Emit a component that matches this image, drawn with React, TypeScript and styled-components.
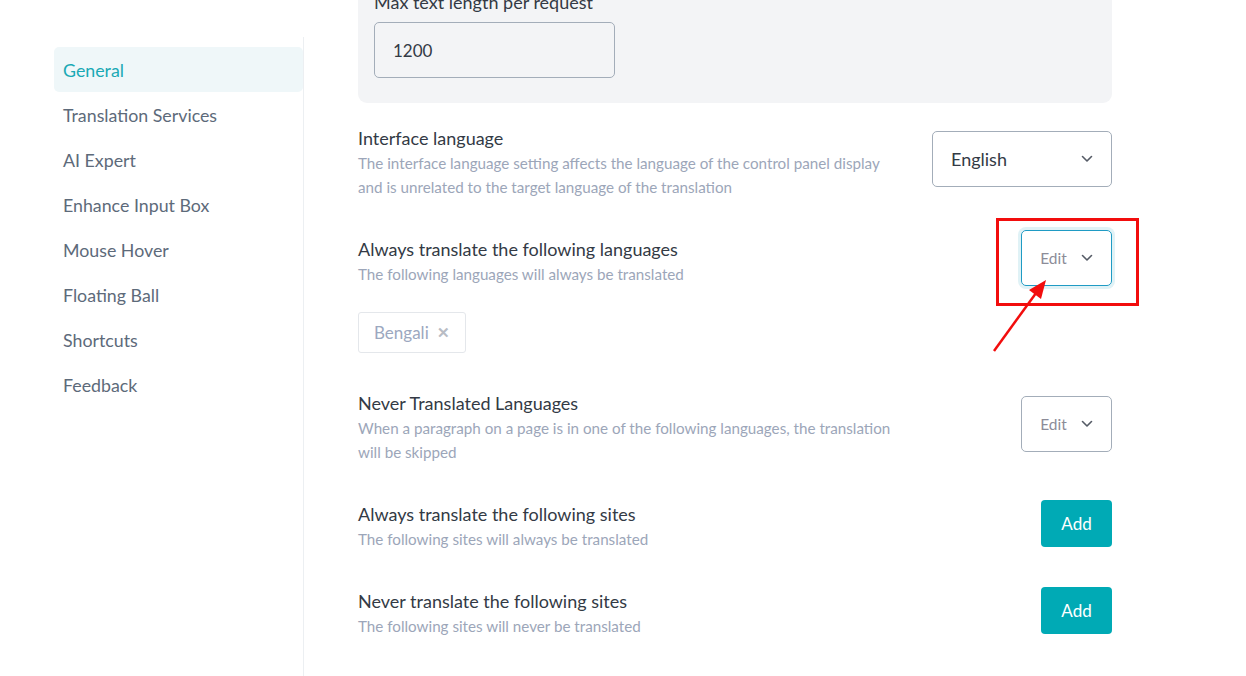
import React from "react";
import styled, { createGlobalStyle } from "styled-components";

const GlobalStyle = createGlobalStyle`
    html, body {
        margin: 0;
        padding: 0;
        background: #ffffff;
        font-family: Lato, "Noto Sans", sans-serif;
        overflow: hidden;
    }
`;

type NavItemProps = {
    active?: boolean
}

const Page = styled.div`
    display: flex;
    width: 1246px;
    height: 676px;
    overflow: hidden;
`;

const Sidebar = styled.nav`
    display: flex;
    flex-direction: column;
    width: 249px;
    margin: 37px 0 0 54px;
    padding-top: 10px;
    border-right: 1px solid #eceff2;
`;

const NavItem = styled.div<NavItemProps>`
    height: 45px;
    display: flex;
    align-items: center;
    padding-left: 9px;
    border-radius: 5px;
    font-size: 17.8px;
    color: ${props => props.active ? "#1aa9b5" : "#5d6a7a"};
    background-color: ${props => props.active ? "#eff7f9" : "transparent"};
`;

const Main = styled.main`
    display: flex;
    flex-direction: column;
    width: 754px;
    margin-left: 54px;
`;

const Card = styled.div`
    margin-top: -26px;
    padding: 16px 16px 25px;
    background-color: #f3f4f6;
    border-radius: 0 0 9px 9px;
`;

const FieldLabel = styled.div`
    font-size: 18px;
    line-height: 24px;
    color: #333a45;
    margin-bottom: 8px;
`;

const TextInput = styled.div`
    box-sizing: border-box;
    width: 241px;
    height: 56px;
    display: flex;
    align-items: center;
    padding-left: 18px;
    border: 1px solid #a3adb9;
    border-radius: 5px;
    font-size: 17px;
    color: #333a45;
`;

const Section = styled.section`
    display: flex;
    flex-direction: column;
    padding: 16px 0 15px;
`;

const Row = styled.div`
    display: flex;
    justify-content: space-between;
    align-items: center;
`;

const TextBox = styled.div`
    display: flex;
    flex-direction: column;
    max-width: 545px;
    padding-top: 6px;
`;

const Title = styled.div`
    font-size: 18px;
    line-height: 26px;
    color: #333a45;
`;

const Desc = styled.div`
    font-size: 15.2px;
    line-height: 24px;
    color: #9ca6b9;
`;

const SelectBox = styled.div`
    box-sizing: border-box;
    width: 180px;
    height: 56px;
    display: flex;
    align-items: center;
    justify-content: space-between;
    padding: 0 18px;
    border: 1px solid #a3adb9;
    border-radius: 5px;
    font-size: 18px;
    color: #333a45;
`;

const EditWrap = styled.div`
    position: relative;
`;

type EditProps = {
    focused?: boolean
}

const EditButton = styled.div<EditProps>`
    box-sizing: border-box;
    width: 91px;
    height: 56px;
    display: flex;
    align-items: center;
    justify-content: center;
    gap: 14px;
    border: 1px solid ${props => props.focused ? "#1f9bc4" : "#a3adb9"};
    box-shadow: ${props => props.focused ? "0 0 0 3px #e0f2f6" : "none"};
    border-radius: 5px;
    font-size: 15.5px;
    color: #8c8c98;
`;

const Highlight = styled.div`
    position: absolute;
    left: -25px;
    top: -12px;
    width: 143px;
    height: 88px;
    box-sizing: border-box;
    border: 3px solid #f20d0d;
    pointer-events: none;
`;

const Arrow = styled.svg`
    position: absolute;
    left: -30px;
    top: 46px;
    overflow: visible;
`;

const AddButton = styled.button`
    width: 71px;
    height: 47px;
    border: none;
    border-radius: 4px;
    background-color: #00aab5;
    color: #ffffff;
    font-family: Lato, "Noto Sans", sans-serif;
    font-size: 17px;
`;

const TagRow = styled.div`
    display: flex;
    margin-top: 26px;
`;

const Tag = styled.div`
    box-sizing: border-box;
    height: 41px;
    display: flex;
    align-items: center;
    gap: 8px;
    padding: 0 15px;
    border: 1px solid #e4e7eb;
    border-radius: 3px;
    font-size: 17px;
    color: #9ca8c0;
`;

const Close = styled.span`
    font-size: 15px;
    font-weight: bold;
    color: #b8bcc4;
`;

const Chevron = () => (
    <svg width="12" height="8" viewBox="0 0 12 8">
        <path d="M1.5 1.5 L6 6 L10.5 1.5" fill="none" stroke="#555b66" strokeWidth="1.6" strokeLinecap="round" strokeLinejoin="round" />
    </svg>
);

const navItems = [
    "General",
    "Translation Services",
    "AI Expert",
    "Enhance Input Box",
    "Mouse Hover",
    "Floating Ball",
    "Shortcuts",
    "Feedback",
];

export default function App() {
    return (
        <>
            <GlobalStyle />
            <Page>
                <Sidebar>
                    {navItems.map((item, i) => (
                        <NavItem key={item} active={i === 0}>{item}</NavItem>
                    ))}
                </Sidebar>
                <Main>
                    <Card>
                        <FieldLabel>Max text length per request</FieldLabel>
                        <TextInput>1200</TextInput>
                    </Card>

                    <Section>
                        <Row>
                            <TextBox>
                                <Title>Interface language</Title>
                                <Desc>The interface language setting affects the language of the control panel display and is unrelated to the target language of the translation</Desc>
                            </TextBox>
                            <SelectBox>English <Chevron /></SelectBox>
                        </Row>
                    </Section>

                    <Section>
                        <Row>
                            <TextBox>
                                <Title>Always translate the following languages</Title>
                                <Desc>The following languages will always be translated</Desc>
                            </TextBox>
                            <EditWrap>
                                <EditButton focused>Edit <Chevron /></EditButton>
                                <Highlight />
                                <Arrow width="60" height="80" viewBox="0 0 60 80">
                                    <line x1="3" y1="75" x2="48" y2="13" stroke="#f20d0d" strokeWidth="2.5" />
                                    <polygon points="55,4 38,14 50,23" fill="#f20d0d" />
                                </Arrow>
                            </EditWrap>
                        </Row>
                        <TagRow>
                            <Tag>Bengali <Close>✕</Close></Tag>
                        </TagRow>
                    </Section>

                    <Section>
                        <Row>
                            <TextBox>
                                <Title>Never Translated Languages</Title>
                                <Desc>When a paragraph on a page is in one of the following languages, the translation will be skipped</Desc>
                            </TextBox>
                            <EditButton>Edit <Chevron /></EditButton>
                        </Row>
                    </Section>

                    <Section>
                        <Row>
                            <TextBox>
                                <Title>Always translate the following sites</Title>
                                <Desc>The following sites will always be translated</Desc>
                            </TextBox>
                            <AddButton>Add</AddButton>
                        </Row>
                    </Section>

                    <Section>
                        <Row>
                            <TextBox>
                                <Title>Never translate the following sites</Title>
                                <Desc>The following sites will never be translated</Desc>
                            </TextBox>
                            <AddButton>Add</AddButton>
                        </Row>
                    </Section>
                </Main>
            </Page>
        </>
    );
}
